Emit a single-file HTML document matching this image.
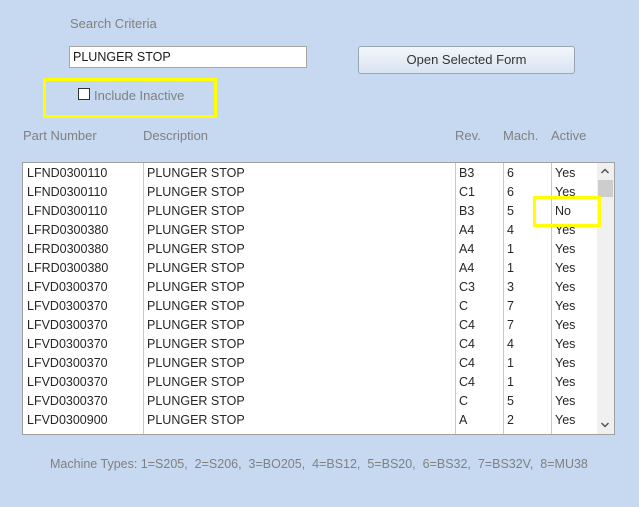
<!DOCTYPE html>
<html><head><style>
body{margin:0;width:639px;height:507px;background:#c6d9f1;font-family:"Liberation Sans",sans-serif;position:relative;overflow:hidden}
.a{position:absolute;white-space:nowrap}
.lbl{color:#808080;font-size:13px}
.box{position:absolute;left:22px;top:162px;width:591px;height:271px;background:#fff;border:1px solid #a0a0a0;overflow:hidden}
.row{position:absolute;left:0;width:574px;height:19px;font-size:12.5px;color:#262626;line-height:19px}
.row span{position:absolute;top:0;white-space:nowrap}
.vl{position:absolute;top:0;width:1px;height:271px;background:#c8c8c8}
</style></head><body>
<div class="a lbl" style="left:70px;top:16px">Search Criteria</div>
<div class="a" style="left:69px;top:46px;width:238px;height:22px;background:#fff;border:1px solid #a6a6a6;font-size:12.5px;line-height:20px;color:#1a1a1a;padding-left:3px;box-sizing:border-box">PLUNGER STOP</div>
<div class="a" style="left:358px;top:46px;width:217px;height:28px;box-sizing:border-box;border:1px solid #9aa6b6;border-radius:3px;background:linear-gradient(#f3f6fb,#d9e3f1);text-align:center;line-height:26px;font-size:13px;color:#333">Open Selected Form</div>
<div class="a" style="left:43px;top:78px;width:174px;height:40px;box-sizing:border-box;border:3px solid #ffff00"></div>
<div class="a" style="left:78px;top:88px;width:12px;height:12px;box-sizing:border-box;border:1px solid #333;background:#fff"></div>
<div class="a lbl" style="left:94px;top:88px">Include Inactive</div>
<div class="a lbl" style="left:23px;top:128px">Part Number</div>
<div class="a lbl" style="left:143px;top:128px">Description</div>
<div class="a lbl" style="left:455px;top:128px">Rev.</div>
<div class="a lbl" style="left:503px;top:128px">Mach.</div>
<div class="a lbl" style="left:551px;top:128px">Active</div>
<div class="box">
<div class="vl" style="left:120px"></div>
<div class="vl" style="left:432px"></div>
<div class="vl" style="left:480px"></div>
<div class="vl" style="left:528px"></div>
<div style="position:absolute;left:574px;top:0;width:17px;height:271px;background:#f0f0f0"></div>
<div style="position:absolute;left:575px;top:17px;width:15px;height:17px;background:#cdcdcd"></div>
<svg style="position:absolute;left:577px;top:4px" width="10" height="8"><path d="M1.5 6 L5 2.5 L8.5 6" stroke="#555" stroke-width="1.5" fill="none"/></svg>
<svg style="position:absolute;left:577px;top:258px" width="10" height="8"><path d="M1.5 2 L5 5.5 L8.5 2" stroke="#555" stroke-width="1.5" fill="none"/></svg>
<div id="rows"></div>
</div>
<div class="a" style="left:533px;top:196px;width:68px;height:31px;box-sizing:border-box;border:3px solid #ffff00"></div>
<div class="a lbl" style="left:50px;top:457px;font-size:12.5px">Machine Types: 1=S205,&nbsp; 2=S206,&nbsp; 3=BO205,&nbsp; 4=BS12,&nbsp; 5=BS20,&nbsp; 6=BS32,&nbsp; 7=BS32V,&nbsp; 8=MU38</div>
<script>
var d=[["LFND0300110","B3","6","Yes"],["LFND0300110","C1","6","Yes"],["LFND0300110","B3","5","No"],["LFRD0300380","A4","4","Yes"],["LFRD0300380","A4","1","Yes"],["LFRD0300380","A4","1","Yes"],["LFVD0300370","C3","3","Yes"],["LFVD0300370","C","7","Yes"],["LFVD0300370","C4","7","Yes"],["LFVD0300370","C4","4","Yes"],["LFVD0300370","C4","1","Yes"],["LFVD0300370","C4","1","Yes"],["LFVD0300370","C","5","Yes"],["LFVD0300900","A","2","Yes"]];
var h="";d.forEach(function(r,i){h+='<div class="row" style="top:'+(i*19+1)+'px"><span style="left:4px">'+r[0]+'</span><span style="left:124px">PLUNGER STOP</span><span style="left:436px">'+r[1]+'</span><span style="left:484px">'+r[2]+'</span><span style="left:532px">'+r[3]+'</span></div>'});
document.getElementById("rows").innerHTML=h;
</script>
</body></html>
